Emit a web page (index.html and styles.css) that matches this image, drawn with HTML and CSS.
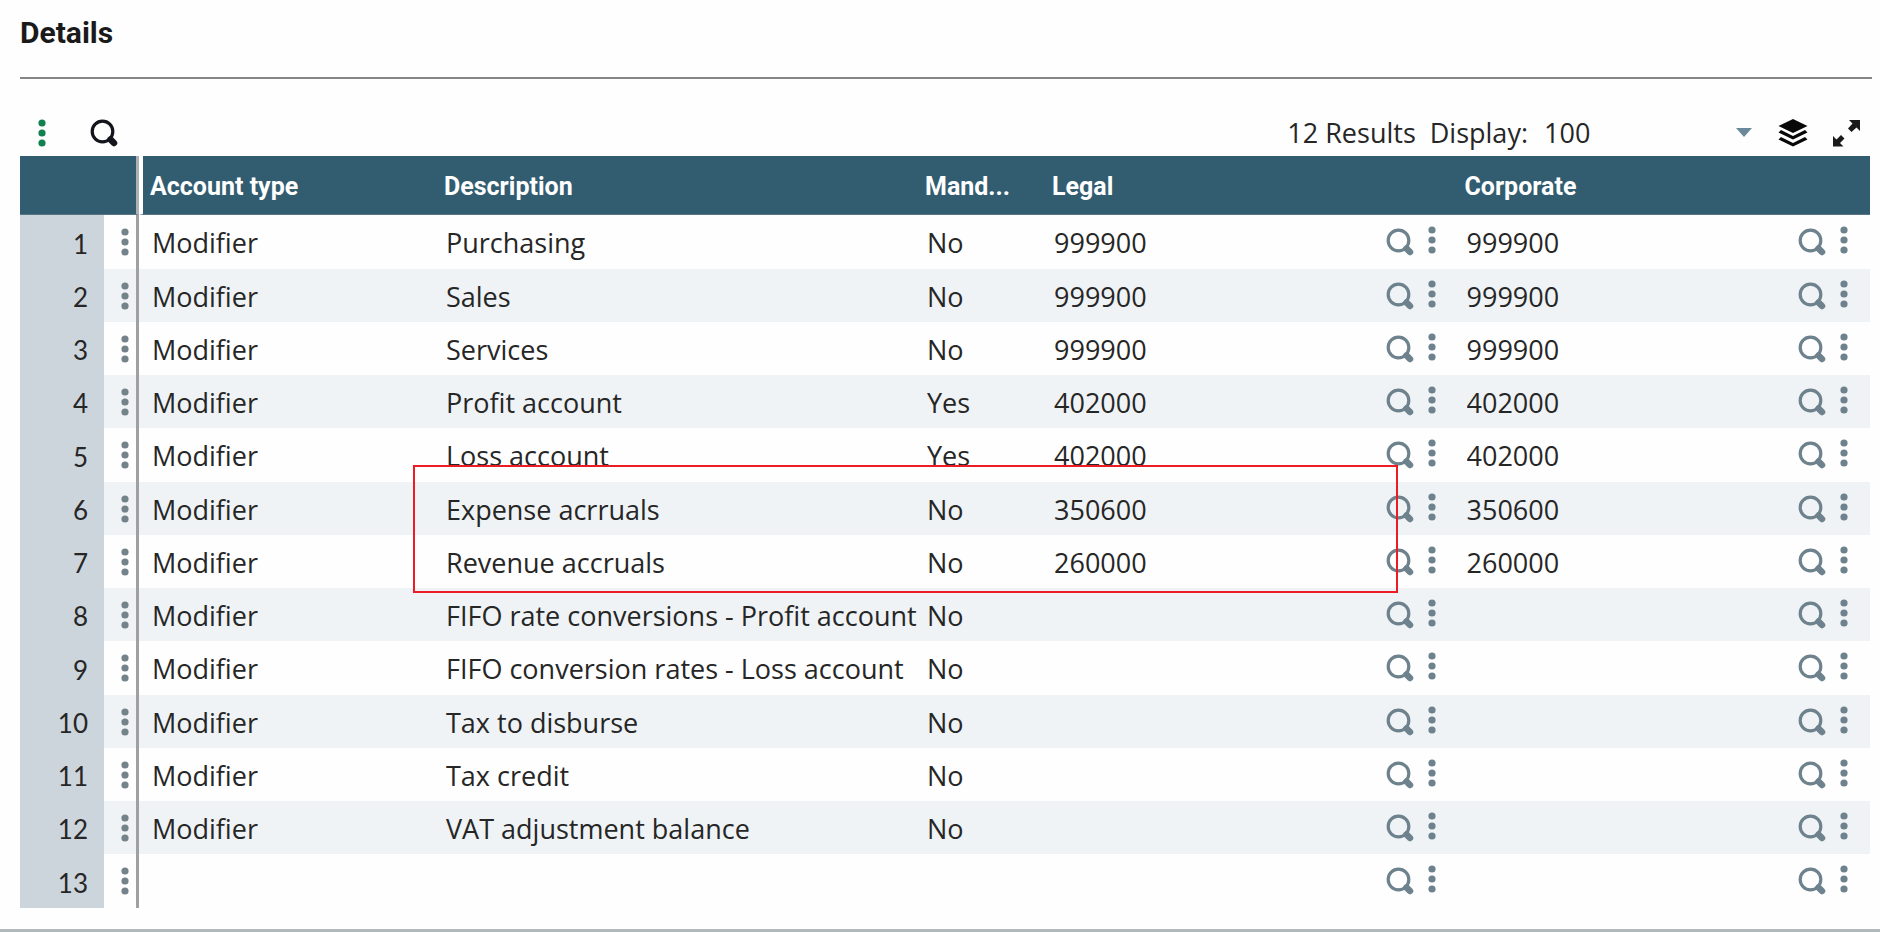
FILE: index.html
```
<!DOCTYPE html>
<html lang="en">
<head>
<meta charset="utf-8">
<title>Details</title>
<link rel="stylesheet" href="styles.css">
</head>
<body>
<svg class="sprite" aria-hidden="true">
  <symbol id="search" viewBox="0 0 28 28"><circle cx="12.500" cy="12.500" r="10.300" fill="none" stroke="currentColor" stroke-width="3.200"/><path d="M20.500 20.500l3.500 3.500" stroke="currentColor" stroke-width="6.500" stroke-linecap="round"/></symbol>
  <symbol id="dots" viewBox="0 0 8 28"><circle cx="4" cy="4" r="3.600" fill="currentColor"/><circle cx="4" cy="14" r="3.600" fill="currentColor"/><circle cx="4" cy="24" r="3.600" fill="currentColor"/></symbol>
</svg>
<main class="panel">
  <h1 class="title">Details</h1>
  <div class="toolbar">
    <button class="icon menu" aria-label="Menu"><svg class="dots"><use href="#dots"/></svg></button>
    <button class="icon find" aria-label="Search"><svg class="glass"><use href="#search"/></svg></button>
    <span class="results">12 Results</span>
    <label class="display" for="display">Display:</label>
    <div class="picker">
      <select id="display"><option>100</option></select>
      <svg class="caret" viewBox="0 0 16 9"><path d="M0 0h16L8 9z" fill="#6a8a9b"/></svg>
    </div>
    <button class="icon layers" aria-label="Layers"><svg class="big" viewBox="0 0 30 28"><path d="M15 0l14.500 7L15 14 .5 7z"/><path d="M3 11l12 6 12-6 2.500 2.500L15 20.500.5 13.500zM3 18l12 6 12-6 2.500 2.500L15 27.500.5 20.500z"/></svg></button>
    <button class="icon expand" aria-label="Full screen"><svg class="big" viewBox="0 0 28 28"><path d="M17 1h11v11l-3.500-3.500-5 4.500-3.500-3.500 4.500-5zM1 17l3.500 3.500L9 16l3.500 3.500L8 24l3.500 3.500H1z"/></svg></button>
  </div>
  <div class="grid">
    <table>
      <colgroup><col class="c-num"><col class="c-menu"><col class="c-type"><col class="c-desc"><col class="c-mand"><col><col></colgroup>
      <thead><tr><th></th><th class="pin"></th><th class="first">Account type</th><th>Description</th><th>Mand...</th><th>Legal</th><th>Corporate</th></tr></thead>
      <tbody>
        <tr><td class="num">1</td><td class="pin"><button class="icon" aria-label="Row menu"><svg class="dots"><use href="#dots"/></svg></button></td><td class="type">Modifier</td><td>Purchasing</td><td>No</td><td class="acct"><div class="field"><input aria-label="Legal" value="999900"><button class="icon" aria-label="Look up"><svg class="glass"><use href="#search"/></svg></button><button class="icon" aria-label="Actions"><svg class="dots"><use href="#dots"/></svg></button></div></td><td class="acct"><div class="field"><input aria-label="Corporate" value="999900"><button class="icon" aria-label="Look up"><svg class="glass"><use href="#search"/></svg></button><button class="icon" aria-label="Actions"><svg class="dots"><use href="#dots"/></svg></button></div></td></tr>
        <tr><td class="num">2</td><td class="pin"><button class="icon" aria-label="Row menu"><svg class="dots"><use href="#dots"/></svg></button></td><td class="type">Modifier</td><td>Sales</td><td>No</td><td class="acct"><div class="field"><input aria-label="Legal" value="999900"><button class="icon" aria-label="Look up"><svg class="glass"><use href="#search"/></svg></button><button class="icon" aria-label="Actions"><svg class="dots"><use href="#dots"/></svg></button></div></td><td class="acct"><div class="field"><input aria-label="Corporate" value="999900"><button class="icon" aria-label="Look up"><svg class="glass"><use href="#search"/></svg></button><button class="icon" aria-label="Actions"><svg class="dots"><use href="#dots"/></svg></button></div></td></tr>
        <tr><td class="num">3</td><td class="pin"><button class="icon" aria-label="Row menu"><svg class="dots"><use href="#dots"/></svg></button></td><td class="type">Modifier</td><td>Services</td><td>No</td><td class="acct"><div class="field"><input aria-label="Legal" value="999900"><button class="icon" aria-label="Look up"><svg class="glass"><use href="#search"/></svg></button><button class="icon" aria-label="Actions"><svg class="dots"><use href="#dots"/></svg></button></div></td><td class="acct"><div class="field"><input aria-label="Corporate" value="999900"><button class="icon" aria-label="Look up"><svg class="glass"><use href="#search"/></svg></button><button class="icon" aria-label="Actions"><svg class="dots"><use href="#dots"/></svg></button></div></td></tr>
        <tr><td class="num">4</td><td class="pin"><button class="icon" aria-label="Row menu"><svg class="dots"><use href="#dots"/></svg></button></td><td class="type">Modifier</td><td>Profit account</td><td>Yes</td><td class="acct"><div class="field"><input aria-label="Legal" value="402000"><button class="icon" aria-label="Look up"><svg class="glass"><use href="#search"/></svg></button><button class="icon" aria-label="Actions"><svg class="dots"><use href="#dots"/></svg></button></div></td><td class="acct"><div class="field"><input aria-label="Corporate" value="402000"><button class="icon" aria-label="Look up"><svg class="glass"><use href="#search"/></svg></button><button class="icon" aria-label="Actions"><svg class="dots"><use href="#dots"/></svg></button></div></td></tr>
        <tr><td class="num">5</td><td class="pin"><button class="icon" aria-label="Row menu"><svg class="dots"><use href="#dots"/></svg></button></td><td class="type">Modifier</td><td>Loss account</td><td>Yes</td><td class="acct"><div class="field"><input aria-label="Legal" value="402000"><button class="icon" aria-label="Look up"><svg class="glass"><use href="#search"/></svg></button><button class="icon" aria-label="Actions"><svg class="dots"><use href="#dots"/></svg></button></div></td><td class="acct"><div class="field"><input aria-label="Corporate" value="402000"><button class="icon" aria-label="Look up"><svg class="glass"><use href="#search"/></svg></button><button class="icon" aria-label="Actions"><svg class="dots"><use href="#dots"/></svg></button></div></td></tr>
        <tr><td class="num">6</td><td class="pin"><button class="icon" aria-label="Row menu"><svg class="dots"><use href="#dots"/></svg></button></td><td class="type">Modifier</td><td>Expense acrruals</td><td>No</td><td class="acct"><div class="field"><input aria-label="Legal" value="350600"><button class="icon" aria-label="Look up"><svg class="glass"><use href="#search"/></svg></button><button class="icon" aria-label="Actions"><svg class="dots"><use href="#dots"/></svg></button></div></td><td class="acct"><div class="field"><input aria-label="Corporate" value="350600"><button class="icon" aria-label="Look up"><svg class="glass"><use href="#search"/></svg></button><button class="icon" aria-label="Actions"><svg class="dots"><use href="#dots"/></svg></button></div></td></tr>
        <tr><td class="num">7</td><td class="pin"><button class="icon" aria-label="Row menu"><svg class="dots"><use href="#dots"/></svg></button></td><td class="type">Modifier</td><td>Revenue accruals</td><td>No</td><td class="acct"><div class="field"><input aria-label="Legal" value="260000"><button class="icon" aria-label="Look up"><svg class="glass"><use href="#search"/></svg></button><button class="icon" aria-label="Actions"><svg class="dots"><use href="#dots"/></svg></button></div></td><td class="acct"><div class="field"><input aria-label="Corporate" value="260000"><button class="icon" aria-label="Look up"><svg class="glass"><use href="#search"/></svg></button><button class="icon" aria-label="Actions"><svg class="dots"><use href="#dots"/></svg></button></div></td></tr>
        <tr><td class="num">8</td><td class="pin"><button class="icon" aria-label="Row menu"><svg class="dots"><use href="#dots"/></svg></button></td><td class="type">Modifier</td><td>FIFO rate conversions - Profit account</td><td>No</td><td class="acct"><div class="field"><input aria-label="Legal"><button class="icon" aria-label="Look up"><svg class="glass"><use href="#search"/></svg></button><button class="icon" aria-label="Actions"><svg class="dots"><use href="#dots"/></svg></button></div></td><td class="acct"><div class="field"><input aria-label="Corporate"><button class="icon" aria-label="Look up"><svg class="glass"><use href="#search"/></svg></button><button class="icon" aria-label="Actions"><svg class="dots"><use href="#dots"/></svg></button></div></td></tr>
        <tr><td class="num">9</td><td class="pin"><button class="icon" aria-label="Row menu"><svg class="dots"><use href="#dots"/></svg></button></td><td class="type">Modifier</td><td>FIFO conversion rates - Loss account</td><td>No</td><td class="acct"><div class="field"><input aria-label="Legal"><button class="icon" aria-label="Look up"><svg class="glass"><use href="#search"/></svg></button><button class="icon" aria-label="Actions"><svg class="dots"><use href="#dots"/></svg></button></div></td><td class="acct"><div class="field"><input aria-label="Corporate"><button class="icon" aria-label="Look up"><svg class="glass"><use href="#search"/></svg></button><button class="icon" aria-label="Actions"><svg class="dots"><use href="#dots"/></svg></button></div></td></tr>
        <tr><td class="num">10</td><td class="pin"><button class="icon" aria-label="Row menu"><svg class="dots"><use href="#dots"/></svg></button></td><td class="type">Modifier</td><td>Tax to disburse</td><td>No</td><td class="acct"><div class="field"><input aria-label="Legal"><button class="icon" aria-label="Look up"><svg class="glass"><use href="#search"/></svg></button><button class="icon" aria-label="Actions"><svg class="dots"><use href="#dots"/></svg></button></div></td><td class="acct"><div class="field"><input aria-label="Corporate"><button class="icon" aria-label="Look up"><svg class="glass"><use href="#search"/></svg></button><button class="icon" aria-label="Actions"><svg class="dots"><use href="#dots"/></svg></button></div></td></tr>
        <tr><td class="num">11</td><td class="pin"><button class="icon" aria-label="Row menu"><svg class="dots"><use href="#dots"/></svg></button></td><td class="type">Modifier</td><td>Tax credit</td><td>No</td><td class="acct"><div class="field"><input aria-label="Legal"><button class="icon" aria-label="Look up"><svg class="glass"><use href="#search"/></svg></button><button class="icon" aria-label="Actions"><svg class="dots"><use href="#dots"/></svg></button></div></td><td class="acct"><div class="field"><input aria-label="Corporate"><button class="icon" aria-label="Look up"><svg class="glass"><use href="#search"/></svg></button><button class="icon" aria-label="Actions"><svg class="dots"><use href="#dots"/></svg></button></div></td></tr>
        <tr><td class="num">12</td><td class="pin"><button class="icon" aria-label="Row menu"><svg class="dots"><use href="#dots"/></svg></button></td><td class="type">Modifier</td><td>VAT adjustment balance</td><td>No</td><td class="acct"><div class="field"><input aria-label="Legal"><button class="icon" aria-label="Look up"><svg class="glass"><use href="#search"/></svg></button><button class="icon" aria-label="Actions"><svg class="dots"><use href="#dots"/></svg></button></div></td><td class="acct"><div class="field"><input aria-label="Corporate"><button class="icon" aria-label="Look up"><svg class="glass"><use href="#search"/></svg></button><button class="icon" aria-label="Actions"><svg class="dots"><use href="#dots"/></svg></button></div></td></tr>
        <tr><td class="num">13</td><td class="pin"><button class="icon" aria-label="Row menu"><svg class="dots"><use href="#dots"/></svg></button></td><td class="type"></td><td></td><td></td><td class="acct"><div class="field"><input aria-label="Legal"><button class="icon" aria-label="Look up"><svg class="glass"><use href="#search"/></svg></button><button class="icon" aria-label="Actions"><svg class="dots"><use href="#dots"/></svg></button></div></td><td class="acct"><div class="field"><input aria-label="Corporate"><button class="icon" aria-label="Look up"><svg class="glass"><use href="#search"/></svg></button><button class="icon" aria-label="Actions"><svg class="dots"><use href="#dots"/></svg></button></div></td></tr>
      </tbody>
    </table>
    <div class="highlight"></div>
  </div>
</main>
</body>
</html>
```
FILE: styles.css
```
* { box-sizing: border-box; }
body { margin: 0; background: #fefefe; color: #262626; font: 27px/36px "Open Sans", "Noto Sans", sans-serif; }
.sprite { position: absolute; width: 0; height: 0; }
.panel { padding: 12px 10px 21px 20px; border-bottom: 3px solid #b1b9bd; }
.title { margin: 0 -2px 0 0; padding: 3px 0 26px; border-bottom: 2px solid #868686; font: bold 30px/36px Roboto, sans-serif; color: #1a1a1a; }
.toolbar { display: flex; align-items: center; height: 77px; padding: 30px 10px 0 16px; }
.icon { display: flex; flex: none; padding: 0; border: 0; background: none; color: #6d828d; cursor: pointer; }
.dots { width: 8px; height: 28px; margin: 0 2px; }
.glass { width: 28px; height: 28px; }
.menu { color: #128150; }
.find { margin-left: 42px; color: #14141c; }
.results { margin-left: auto; }
.display { margin-left: 14px; }
.picker { display: flex; align-items: center; width: 208px; margin-left: 16px; }
.picker select { flex: 1; min-width: 0; height: 36px; padding: 0; border: 0; background: none; color: inherit; font: inherit; appearance: none; }
.caret { width: 16px; height: 9px; }
.layers { margin-left: 26px; color: #080808; }
.expand { margin-left: 24px; color: #1a1a1a; }
.big { width: 30px; height: 28px; fill: currentColor; }
.expand .big { width: 28px; }
.grid { position: relative; }
table { width: 100%; table-layout: fixed; border-spacing: 0; border-collapse: separate; }
.c-num { width: 84px; }
.c-menu { width: 35px; }
.c-type { width: 298px; }
.c-desc { width: 481px; }
.c-mand { width: 127px; }
th { height: 59px; padding: 4px 7px 0; background: #325c70; color: #fff; font: bold 25px/36px Roboto, sans-serif; text-align: left; border-bottom: 1px solid #577584; }
th.first { border-left: 4px solid #fff; }
th.pin { border-right: 3px solid #aeb1b3; }
td { height: 53px; padding: 2px 0 0 9px; white-space: nowrap; }
tr:nth-child(4n+1) td { height: 54px; }
tbody tr:nth-child(even) { background: #eff3f5; }
td.num { padding: 3px 16px 0 0; background: #ccd5db; font: 26px/36px Lato, sans-serif; text-align: right; }
td.pin { padding: 0 0 0 15px; border-right: 3px solid #a0a0a0; }
td.pin .icon { color: #74828a; }
td.type { padding-left: 13px; }
td.acct { padding-right: 20px; }
.field { display: flex; align-items: center; gap: 6px; }
.field input { flex: 1; min-width: 0; height: 36px; padding: 0; border: 0; background: none; color: inherit; font: inherit; }
.field .icon { padding-bottom: 2px; }
.field .icon:last-child { padding-bottom: 6px; margin-left: 6px; }
.highlight { position: absolute; top: 309px; left: 393px; right: 472px; height: 128px; border: 2px solid #ed1c24; pointer-events: none; }
```
